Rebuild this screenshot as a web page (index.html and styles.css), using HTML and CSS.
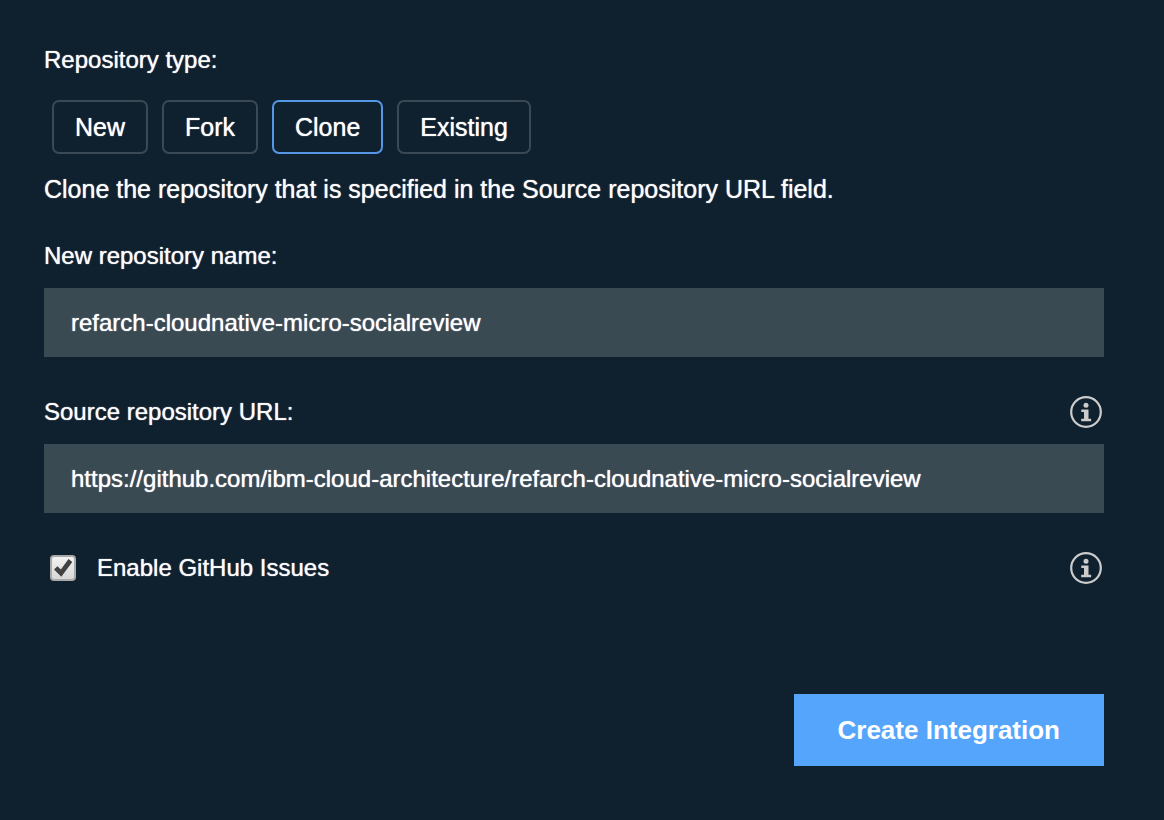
FILE: index.html
```html
<!DOCTYPE html>
<html lang="en">
<head>
<meta charset="utf-8">
<meta name="viewport" content="width=device-width, initial-scale=1">
<title>Create Integration</title>
<link rel="stylesheet" href="styles.css">
</head>
<body>
<form class="panel">
  <h2 class="label" id="type-label">Repository type:</h2>
  <div class="types" role="group" aria-labelledby="type-label">
    <button class="type" type="button" aria-pressed="false">New</button>
    <button class="type" type="button" aria-pressed="false">Fork</button>
    <button class="type selected" type="button" aria-pressed="true">Clone</button>
    <button class="type" type="button" aria-pressed="false">Existing</button>
  </div>
  <p class="description">Clone the repository that is specified in the Source repository URL field.</p>

  <div class="field">
    <div class="field-head"><label class="label" for="repo-name">New repository name:</label></div>
    <input class="text-input" id="repo-name" type="text" value="refarch-cloudnative-micro-socialreview">
  </div>

  <div class="field">
    <div class="field-head">
      <label class="label" for="source-url">Source repository URL:</label>
      <button class="info" type="button" aria-label="About the source repository URL">
        <svg viewBox="0 0 32 32" width="32" height="32" aria-hidden="true"><circle cx="16" cy="16" r="14.8" fill="none" stroke="currentColor" stroke-width="2.2"/><circle cx="16" cy="9.3" r="2.5" fill="currentColor"/><path d="M11.3 13.4h7.2v9.3h2.6v2.5h-9.9v-2.5h2.8v-6.8h-2.7z" fill="currentColor"/></svg>
      </button>
    </div>
    <input class="text-input" id="source-url" type="text" value="https://github.com/ibm-cloud-architecture/refarch-cloudnative-micro-socialreview">
  </div>

  <div class="field-head issues">
    <span class="check">
      <input class="checkbox" id="issues" type="checkbox" checked>
      <svg class="tick" viewBox="0 0 26 26" width="26" height="26" aria-hidden="true"><path d="M4 14.6l3.4-3.4 3.5 3.3 7.6-10.4 3.8 2.8-11 14.8z" fill="#424242"/></svg>
    </span>
    <label class="label" for="issues">Enable GitHub Issues</label>
    <button class="info" type="button" aria-label="About GitHub Issues">
      <svg viewBox="0 0 32 32" width="32" height="32" aria-hidden="true"><circle cx="16" cy="16" r="14.8" fill="none" stroke="currentColor" stroke-width="2.2"/><circle cx="16" cy="9.3" r="2.5" fill="currentColor"/><path d="M11.3 13.4h7.2v9.3h2.6v2.5h-9.9v-2.5h2.8v-6.8h-2.7z" fill="currentColor"/></svg>
    </button>
  </div>

  <div class="actions"><button class="submit" type="submit">Create Integration</button></div>
</form>
</body>
</html>
```
FILE: styles.css
```css
* { box-sizing: border-box; }
body {
  margin: 0;
  background: #0f212e;
  color: #fbfbfb;
  font-family: "Liberation Sans", Arial, sans-serif;
  font-size: 24px;
  line-height: 32px;
}
button, input { margin: 0; font: inherit; color: inherit; }
button { cursor: pointer; }
.panel { padding: 44px 60px 54px 44px; }
.label { margin: 0; font-size: 24px; font-weight: 400; }
.label, .type, .description, .text-input { text-shadow: 0 0 1px currentColor; }
.types { display: flex; flex-wrap: wrap; gap: 14px; margin: 24px 0 19px 8px; }
.type {
  height: 54px;
  padding: 0 21px;
  border: 2px solid #3a4953;
  border-radius: 7px;
  background: transparent;
  color: #ffffff;
  font-size: 25px;
}
.selected { border-color: #5596e6; }
.description { margin: 0 0 35px; font-size: 25px; }
.field { margin-bottom: 39px; }
.field-head { display: flex; align-items: center; min-height: 32px; margin-bottom: 16px; }
.info {
  display: flex;
  margin-left: auto;
  margin-right: 2px;
  padding: 0;
  border: 0;
  border-radius: 50%;
  background: transparent;
  color: #cccccc;
}
.text-input {
  display: block;
  width: 100%;
  height: 69px;
  padding: 0 27px;
  border: 0;
  border-radius: 0;
  background: #3a4a53;
  color: #ffffff;
}
.issues { margin-bottom: 110px; }
.check { display: grid; margin: 0 21px 0 6px; }
.checkbox, .tick { grid-area: 1 / 1; }
.checkbox {
  appearance: none;
  width: 26px;
  height: 26px;
  border: 2px solid #a9a9a9;
  border-radius: 4px;
  background: linear-gradient(#f2f2f2, #d8d8d8);
}
.tick { visibility: hidden; pointer-events: none; }
.checkbox:checked + .tick { visibility: visible; }
.actions { display: flex; justify-content: flex-end; }
.submit {
  height: 72px;
  padding: 0 44px;
  border: 0;
  background: #55a5fd;
  color: #ffffff;
  font-size: 26px;
  font-weight: 700;
}
```
